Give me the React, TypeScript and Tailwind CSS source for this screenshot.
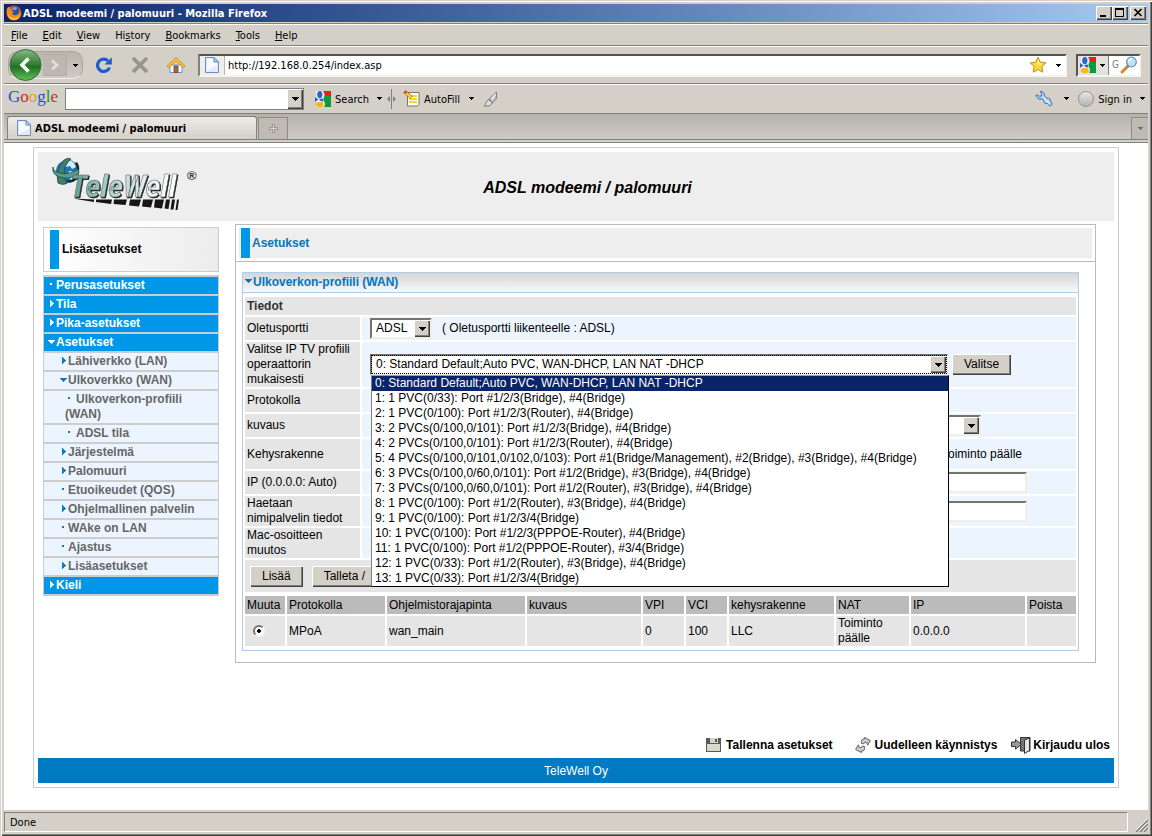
import React from "react";

const raised =
  "bg-[#d4d0c8] shadow-[inset_1px_1px_0_#fff,inset_-1px_-1px_0_#404040,inset_-2px_-2px_0_#808080]";
const sunken =
  "border-t-2 border-l-2 border-b-2 border-r-2 border-t-[#77736a] border-l-[#77736a] border-b-[#f0eee8] border-r-[#f0eee8] bg-white";

function Arrow({ className = "" }: { className?: string }) {
  return (
    <svg className={className} width="7" height="4" viewBox="0 0 7 4" shapeRendering="crispEdges" aria-hidden="true">
      <path d="M0 0h7v1H6v1H5v1H4v1H3V3H2V2H1V1H0z" fill="#000" />
    </svg>
  );
}

function TinyArrow({ fill = "#000" }: { fill?: string }) {
  return (
    <svg width="5" height="3" viewBox="0 0 5 3" shapeRendering="crispEdges" aria-hidden="true">
      <path d="M0 0h5v1H4v1H3v1H2V2H1V1H0z" fill={fill} />
    </svg>
  );
}

function Firefox() {
  return (
    <svg width="16" height="16" viewBox="0 0 16 16" aria-hidden="true">
      <circle cx="8" cy="8" r="7.5" fill="#d9541e" />
      <circle cx="8.5" cy="6.8" r="5.2" fill="#2a50a8" />
      <path d="M6 3q3-2 5 0l-1 2-3 0z" fill="#6fa4e0" />
      <path d="M1 3.5Q2 2 3 1.6L4 3.4 6.6 4 5.6 5.6 8 7 6 8.6q1.6 2.4 4.6 1.4Q13.600 9 13.600 5q3 5-.6 8.400-4.500 3.600-9 .6Q-.5 10.500 1 3.500z" fill="#f08a1d" />
      <path d="M2 6q-.4 5 4 6.600 5 1.200 7.400-2.600-1 5-6 5Q1 14.500 2 6z" fill="#f9c030" />
    </svg>
  );
}

function PageIcon() {
  return (
    <svg width="14" height="16" viewBox="0 0 14 16" aria-hidden="true">
      <path d="M.5.5h8.500l4.500 4.500v10.500H.5z" fill="#dfebfa" stroke="#6b8fc4" />
      <path d="M2 2h6v4h4v3L2 14z" fill="#fff" opacity=".7" />
      <path d="M9 .5V5h4.500z" fill="#b8d2f2" stroke="#6b8fc4" />
    </svg>
  );
}

function GoogleG() {
  return (
    <svg width="16" height="16" viewBox="0 0 16 16" aria-hidden="true">
      <path d="M1 0h15v16H1z" fill="#f2f2ee" />
      <path d="M8 0h8v5H9.500Q10 2 8 0z" fill="#e8201c" />
      <path d="M9.500 5H16v11H9q2-3 0-5.500-1.500-2.500.5-5.500z" fill="#0f9a3c" />
      <path d="M0 6l3.500 2.500L0 11z" fill="#2a63d8" />
      <ellipse cx="4.800" cy="3.600" rx="2.600" ry="3.600" fill="#2a63d8" />
      <path d="M4 8l4-.5v3L5.500 10z" fill="#2a63d8" />
      <ellipse cx="4.800" cy="13.400" rx="4" ry="2.600" fill="#f9b714" />
    </svg>
  );
}

function Reload() {
  return (
    <svg width="18" height="18" viewBox="0 0 18 18" aria-hidden="true">
      <path d="M14.500 11.500A6.200 6.200 0 1 1 13 4.800" fill="none" stroke="#1d5fc8" strokeWidth="3.200" />
      <path d="M16.800 1.200v7.300H9.500z" fill="#1d5fc8" />
    </svg>
  );
}

function Stop() {
  return (
    <svg width="18" height="18" viewBox="0 0 18 18" aria-hidden="true">
      <path d="M2 2l14 14M16 2L2 16" stroke="#97948e" strokeWidth="3.800" />
    </svg>
  );
}

function Home() {
  return (
    <svg width="20" height="18" viewBox="0 0 20 18" aria-hidden="true">
      <path d="M4 9h12v7.500H4z" fill="#f4f8fd" stroke="#6d98cf" />
      <path d="M1 10L10 1.500 19 10l-1.500 1.300L10 5 2.500 11.300z" fill="#ffc935" stroke="#c98a12" strokeWidth=".9" />
      <path d="M8 10h4v6.500H8z" fill="#a4673a" stroke="#7a4620" strokeWidth=".8" />
    </svg>
  );
}

function Star() {
  return (
    <svg width="18" height="18" viewBox="0 0 18 18" aria-hidden="true">
      <path d="M9 1.200l2.400 5 5.400.7-4 3.800 1 5.500L9 13.500l-4.800 2.700 1-5.500-4-3.800 5.400-.7z" fill="#ffd93b" stroke="#c98c12" />
      <path d="M9 3.500l1.600 3.700 3.400.5L9 9z" fill="#fff3a6" />
    </svg>
  );
}

function Magnifier() {
  return (
    <svg width="18" height="18" viewBox="0 0 18 18" aria-hidden="true">
      <path d="M2 16l5.500-5.500" stroke="#e08427" strokeWidth="3" strokeLinecap="round" />
      <path d="M7 11l1.500-1.500" stroke="#7a8794" strokeWidth="2.500" />
      <circle cx="11.500" cy="6" r="4.800" fill="#bfe3fa" stroke="#6e93b8" strokeWidth="1.300" />
      <path d="M8.500 6q.5-3 3.500-3.200" stroke="#fff" strokeWidth="1.400" fill="none" />
    </svg>
  );
}

function Wrench() {
  return (
    <svg width="18" height="18" viewBox="0 0 18 18" aria-hidden="true">
      <path d="M5.500 1.200Q9.500 1.600 9.800 6.400l1.800 1.800q2-.6 3.200.6.900 1 .6 2.400l1.600 2.100q.2 2.500-2.400 2.600l-2.400-2.400q-2.200.2-3-.8-.8-1-.4-2.500L7 8.900Q2.500 10 .9 5.200l1.900-.2L4.600 6.600 6.600 5.600 6.400 3.400z" fill="#a9d0f2" stroke="#3f6fa8" />
      <path d="M8 7l6.500 6.500" stroke="#e8f4fd" strokeWidth="1.200" />
    </svg>
  );
}

function NotePencil() {
  return (
    <svg width="17" height="17" viewBox="0 0 17 17" aria-hidden="true">
      <path d="M4.500 2.500h11.500v12l-1.500 1.500H4.500z" fill="#fffef0" stroke="#77756c" />
      <path d="M7 6h7M6 9h8M6 12h8" stroke="#f0c800" strokeWidth="1.600" />
      <path d="M1.500 1.500l7 6" stroke="#a0781c" strokeWidth="3.400" />
      <path d="M2 2l6 5.200" stroke="#ffd83a" strokeWidth="2" />
      <path d="M.5 2.500l2.200-2 1.600 1.400-2 2.200z" fill="#e0402c" />
    </svg>
  );
}

function Brush() {
  return (
    <svg width="15" height="16" viewBox="0 0 15 16" aria-hidden="true">
      <path d="M13.500 1v6.500L9.500 12 6 8z" fill="#bdbdbd" stroke="#84827e" />
      <path d="M12.500 3L8.500 8.500" stroke="#f0f0f0" strokeWidth="1.500" />
      <path d="M5.500 8.500L9.500 12l-3 3H1q2-1.500 2-3.500z" fill="#dedede" stroke="#77756f" />
    </svg>
  );
}

function TeleWellLogo() {
  return (
    <svg width="150" height="62" viewBox="0 0 150 62" aria-hidden="false">
      <defs>
        <linearGradient id="tw" x1="0" x2="1">
          <stop offset="0" stopColor="#5c9c8c" />
          <stop offset=".35" stopColor="#a9cfc5" />
          <stop offset=".7" stopColor="#e6eeee" />
          <stop offset="1" stopColor="#fff" />
        </linearGradient>
      </defs>
      <circle cx="17.500" cy="15.500" r="11.500" fill="#1878bd" />
      <path d="M15 6q5-3 9 1l2 4-4 2-2-3-4 1zM19 15l6 1 1 4-5 4-3-4z" fill="#d9ecf6" />
      <path d="M27 6q3 4 2 9l-2-1q0-4-2-7zM16 25q6 3 10-1l-2-1q-3 2-7 1z" fill="#1c2a28" />
      <path d="M8 27Q5 14 14 4q4-3 7-1-7 6-7 15 0 5 3 9.500-5 2-9-.5z" fill="#3f7f70" stroke="#1f4b41" strokeWidth=".8" />
      <path d="M3 11q0 5 9 6.500 9 1 16-4.500l1 4q-7 6-15 5Q1 20 3 11z" fill="#5c9a8a" stroke="#1f4b41" strokeWidth=".8" />
      <text
        x="20"
        y="41"
        fontFamily="'Roboto Condensed', 'Open Sans Condensed', 'Liberation Sans', sans-serif"
        fontStyle="italic"
        fontWeight="700"
        fontSize="32"
        fill="url(#tw)"
        stroke="#56605e"
        strokeWidth=".5"
        className="drop-shadow-[1px_1px_0_#1c1c1c]"
      >
        TeleWell
      </text>
      <text x="137" y="24" fontSize="13" fontWeight="700" fill="#333" fontFamily="'Liberation Sans', sans-serif">®</text>
      <path d="M26 42.500l21 1v2.500zM49 43.500h16l-1 4.500-15-2zM67 43.500h13l-1.500 5.500-12-1zM83 43.500h11l-2 7-10-1zM96 43.500h10l-2 8-9-1zM108 43.500h9l-2 9-8-1zM119 43.500h4l-1.500 9.500-4-.5zM125 43.500h3l-1.500 10h-3zM130 43.500h2l-1.500 10.500h-2z" transform="translate(-3 0)" fill="#161616" />
    </svg>
  );
}

function Bullet({ kind, color }: { kind: string; color: string }) {
  if (kind === "down")
    return (
      <svg className="inline-block align-middle" width="7" height="4" viewBox="0 0 7 4" shapeRendering="crispEdges" aria-hidden="true">
        <path d="M0 0h7v1H6v1H5v1H4v1H3V3H2V2H1V1H0z" fill={color} />
      </svg>
    );
  if (kind === "right")
    return (
      <svg className="inline-block align-middle" width="7" height="7" viewBox="0 0 7 7" shapeRendering="crispEdges" aria-hidden="true">
        <path d="M2 0h1v1h1v1h1v1h1v1H5v1H4v1H3v1H2z" fill={color} />
      </svg>
    );
  return (
    <svg className="inline-block align-middle" width="7" height="3" viewBox="0 0 7 3" shapeRendering="crispEdges" aria-hidden="true">
      <path d="M2 0h2v2H2z" fill={color} />
    </svg>
  );
}

const nav = [
  { t: "Perusasetukset", k: "dot", l: 0 },
  { t: "Tila", k: "right", l: 0 },
  { t: "Pika-asetukset", k: "right", l: 0 },
  { t: "Asetukset", k: "down", l: 0 },
  { t: "Lähiverkko (LAN)", k: "right", l: 1 },
  { t: "Ulkoverkko (WAN)", k: "down", l: 1 },
  { t: "Ulkoverkon-profiili (WAN)", k: "dot", l: 2 },
  { t: "ADSL tila", k: "dot", l: 2 },
  { t: "Järjestelmä", k: "right", l: 1 },
  { t: "Palomuuri", k: "right", l: 1 },
  { t: "Etuoikeudet (QOS)", k: "dot", l: 1 },
  { t: "Ohjelmallinen palvelin", k: "right", l: 1 },
  { t: "WAke on LAN", k: "dot", l: 1 },
  { t: "Ajastus", k: "dot", l: 1 },
  { t: "Lisäasetukset", k: "right", l: 1 },
  { t: "Kieli", k: "right", l: 0 },
];

const profiles = [
  "0: Standard Default;Auto PVC, WAN-DHCP, LAN NAT -DHCP",
  "1: 1 PVC(0/33): Port #1/2/3(Bridge), #4(Bridge)",
  "2: 1 PVC(0/100): Port #1/2/3(Router), #4(Bridge)",
  "3: 2 PVCs(0/100,0/101): Port #1/2/3(Bridge), #4(Bridge)",
  "4: 2 PVCs(0/100,0/101): Port #1/2/3(Router), #4(Bridge)",
  "5: 4 PVCs(0/100,0/101,0/102,0/103): Port #1(Bridge/Management), #2(Bridge), #3(Bridge), #4(Bridge)",
  "6: 3 PVCs(0/100,0/60,0/101): Port #1/2(Bridge), #3(Bridge), #4(Bridge)",
  "7: 3 PVCs(0/100,0/60,0/101): Port #1/2(Router), #3(Bridge), #4(Bridge)",
  "8: 1 PVC(0/100): Port #1/2(Router), #3(Bridge), #4(Bridge)",
  "9: 1 PVC(0/100): Port #1/2/3/4(Bridge)",
  "10: 1 PVC(0/100): Port #1/2/3(PPPOE-Router), #4(Bridge)",
  "11: 1 PVC(0/100): Port #1/2(PPPOE-Router), #3/4(Bridge)",
  "12: 1 PVC(0/33): Port #1/2(Router), #3(Bridge), #4(Bridge)",
  "13: 1 PVC(0/33): Port #1/2/3/4(Bridge)",
];

const menus = [
  ["", "F", "ile"],
  ["", "E", "dit"],
  ["", "V", "iew"],
  ["Hi", "s", "tory"],
  ["", "B", "ookmarks"],
  ["", "T", "ools"],
  ["", "H", "elp"],
];

function DropButton() {
  return (
    <span className={`pointer-events-none absolute top-[2px] right-[2px] flex h-[17px] w-4 items-center justify-center ${raised}`}>
      <Arrow />
    </span>
  );
}

function Row({ label, id, height, children }: { label: string; id?: string; height: string; children?: React.ReactNode }) {
  return (
    <div className={`flex gap-[2px] ${height}`}>
      <div className="flex w-[115px] shrink-0 items-center bg-[#e5e5e5] pr-1 pl-[2px]">
        {id ? <label htmlFor={id}>{label}</label> : <span>{label}</span>}
      </div>
      <div className="flex min-w-0 flex-1 items-center bg-[#ecf5ff] pl-2">{children}</div>
    </div>
  );
}

const pageButton = `h-[21px] px-3 whitespace-nowrap ${raised}`;

export default function App() {
  return (
    <div className="flex min-h-screen flex-col bg-[#d4d0c8] p-1 font-['DejaVu_Sans_Condensed','Noto_Sans',sans-serif] text-[11px] leading-[14px] text-black shadow-[inset_1px_1px_0_#d4d0c8,inset_2px_2px_0_#fff,inset_-1px_-1px_0_#404040,inset_-2px_-2px_0_#808080]">
      <header className="flex h-[18px] items-center bg-linear-to-r from-[#0a246a] to-[#a6caf0] pr-[2px] pl-[2px] text-white">
        <Firefox />
        <h1 className="flex-1 pt-px pl-px text-[11px] font-bold">ADSL modeemi / palomuuri - Mozilla Firefox</h1>
        <button aria-label="Minimize" className={`h-[14px] w-4 ${raised}`}>
          <svg width="16" height="14" viewBox="0 0 16 14" shapeRendering="crispEdges"><path d="M4 9h6v2H4z" fill="#000" /></svg>
        </button>
        <button aria-label="Maximize" className={`h-[14px] w-4 ${raised}`}>
          <svg width="16" height="14" viewBox="0 0 16 14" shapeRendering="crispEdges"><path d="M3 2h9v9H3zM4 4v6h7V4z" fill="#000" fillRule="evenodd" /></svg>
        </button>
        <button aria-label="Close" className={`ml-[2px] h-[14px] w-4 ${raised}`}>
          <svg width="16" height="14" viewBox="0 0 16 14"><path d="M4.500 3l7 7M11.500 3l-7 7" stroke="#000" strokeWidth="1.700" /></svg>
        </button>
      </header>

      <nav className="mt-px flex h-[22px] items-center gap-[15px] border-t border-[#808080] pt-[2px] pl-[7px] shadow-[inset_0_1px_0_#fff]">
        {menus.map(([a, k, b]) => (
          <button key={a + k + b}>
            {a}
            <span className="underline">{k}</span>
            {b}
          </button>
        ))}
      </nav>

      <div className="flex h-[38px] items-center border-t border-[#808080] pt-px pr-[7px] pl-1 shadow-[inset_0_1px_0_#fff]">
        <div className="flex h-7 w-[75px] items-center rounded-[10px] border border-[#aaa69e] border-b-[#f0eeea] bg-linear-to-b from-[#b9b5ad] to-[#d0ccc5]">
          <button aria-label="Back" className="shrink-0">
            <svg width="34" height="34" viewBox="0 0 34 34">
              <defs>
                <linearGradient id="bk" x1="0" y1="0" x2="0" y2="1">
                  <stop offset="0" stopColor="#86b886" />
                  <stop offset=".5" stopColor="#2c7d2c" />
                  <stop offset=".55" stopColor="#1e6f1f" />
                  <stop offset="1" stopColor="#5fc15a" />
                </linearGradient>
              </defs>
              <circle cx="16.500" cy="17" r="15.500" fill="url(#bk)" stroke="#3d6b3d" />
              <path d="M19.500 10.500L13 17l6.500 6.500" fill="none" stroke="#fff" strokeWidth="3.600" />
            </svg>
          </button>
          <button aria-label="Forward" className="flex h-[22px] w-6 shrink-0 items-center justify-center border border-l-0 border-[#b1ada5] bg-[#bcb8b0]">
            <svg width="10" height="12" viewBox="0 0 10 12"><path d="M2 1.500L7 6l-5 4.500" fill="none" stroke="#e3e0da" strokeWidth="2.600" /></svg>
          </button>
          <button aria-label="Recent pages" className="flex w-4 shrink-0 justify-center"><TinyArrow /></button>
        </div>
        <button aria-label="Reload" className="ml-3"><Reload /></button>
        <button aria-label="Stop" className="ml-[18px]"><Stop /></button>
        <button aria-label="Home" className="ml-[17px]"><Home /></button>
        <div className="ml-3 flex h-[23px] flex-1 items-stretch border-2 border-t-[#565550] border-r-[#f5f4f0] border-b-[#f5f4f0] border-l-[#808080] bg-white">
          <span className="flex w-[25px] items-center justify-center border-r border-[#bbb8b0] bg-[#f0eeea]"><PageIcon /></span>
          <input aria-label="Address" defaultValue="http://192.168.0.254/index.asp" className="min-w-0 flex-1 pt-px pl-[3px] outline-none" />
          <button aria-label="Bookmark"><Star /></button>
          <button aria-label="History list" className="flex w-[18px] items-center justify-center pl-1"><TinyArrow /></button>
        </div>
        <div className="ml-[9px] flex h-[23px] w-[65px] items-center border-2 border-t-[#565550] border-r-[#f5f4f0] border-b-[#f5f4f0] border-l-[#565550] bg-white">
          <button aria-label="Search engine" className="flex h-full w-[31px] shrink-0 items-center gap-1 border-r border-[#808080] bg-[#e3e1dc] pl-[2px]">
            <GoogleG />
            <TinyArrow />
          </button>
          <input aria-label="Search" placeholder="G" className="w-[11px] pl-[3px] text-[10px] outline-none placeholder:text-[#808080]" />
          <button aria-label="Go"><Magnifier /></button>
        </div>
      </div>

      <div className="flex h-[30px] items-center border-t border-[#808080] pl-1 shadow-[inset_0_1px_0_#fff]">
        <span className="w-[57px] pb-1 font-['Liberation_Serif',serif] text-[17px] leading-5">
          <span className="text-[#1a55c8]">G</span>
          <span className="text-[#d5291f]">o</span>
          <span className="text-[#e0a31a]">o</span>
          <span className="text-[#1a55c8]">g</span>
          <span className="text-[#149a3a]">l</span>
          <span className="text-[#d5291f]">e</span>
        </span>
        <div className="relative h-[22px] w-[239px] border border-[#808080] bg-white">
          <input aria-label="Google search" className="h-full w-[220px] px-1 outline-none" />
          <button aria-label="Search history" className={`absolute top-0 right-0 flex h-5 w-4 items-center justify-center ${raised}`}><Arrow /></button>
        </div>
        <button className="ml-[11px] flex items-center gap-1"><GoogleG /><span className="pt-[2px]">Search</span></button>
        <button aria-label="Search options" className="ml-2"><TinyArrow /></button>
        <svg className="ml-[5px]" width="9" height="20" viewBox="0 0 9 20" aria-hidden="true">
          <path d="M4 0h1v20H4zM0 10l3-3v6zM9 10L6 7v6z" fill="#808080" />
        </svg>
        <button className="ml-[7px] flex items-center gap-1"><NotePencil /><span className="pt-[2px]">AutoFill</span></button>
        <button aria-label="AutoFill options" className="ml-[9px]"><TinyArrow /></button>
        <button aria-label="Highlight" className="ml-[9px]"><Brush /></button>
        <span className="flex-1" />
        <button aria-label="Settings"><Wrench /></button>
        <button aria-label="Settings options" className="ml-[11px]"><TinyArrow /></button>
        <button className="ml-[9px] flex items-center gap-1">
          <span className="h-4 w-4 rounded-full border border-[#98958f] bg-linear-to-b from-[#e6e6e6] to-[#b4b4b4]" />
          <span className="pt-[2px]">Sign in</span>
        </button>
        <button aria-label="Account options" className="mr-[3px] ml-2"><TinyArrow /></button>
      </div>

      <div className="flex h-[27px] items-end border-t border-b border-[#808080] bg-linear-to-b from-[#b4b1a9] to-[#d0ccc5] pl-[3px]">
        <button className="flex h-[23px] w-[250px] items-center gap-1 rounded-t-[3px] border border-b-0 border-[#808080] bg-linear-to-b from-[#edebe8] to-[#d4d0c8] pl-[9px] font-bold">
          <PageIcon />
          <span className="pt-[2px]">ADSL modeemi / palomuuri</span>
        </button>
        <button aria-label="New tab" className="ml-px flex h-[22px] w-[30px] items-center justify-center border border-b-0 border-[#8e8b85] bg-[#bfbbb3]">
          <svg width="9" height="9" viewBox="0 0 9 9" shapeRendering="crispEdges"><path d="M3 0h3v3h3v3H6v3H3V6H0V3h3z" fill="#9c9993" /><path d="M4 1h1v3h3v1H5v3H4V5H1V4h3z" fill="#dad7d1" /></svg>
        </button>
        <span className="flex-1" />
        <button aria-label="List all tabs" className="flex h-[22px] w-[17px] items-center justify-center border border-r-0 border-b-0 border-[#8e8b85] bg-[#bfbbb3]"><TinyArrow fill="#6f6c66" /></button>
      </div>

      <main className="mt-[2px] flex flex-1 flex-col border-t border-[#808080] bg-white px-[29px] pt-1 pb-[22px] font-['Liberation_Sans',sans-serif] text-xs leading-[15px]">
        <div className="flex flex-1 flex-col border border-[#ccc] p-1">
          <div className="grid h-[69px] grid-cols-[160px_1fr_137px] items-center bg-[#eee]">
            <div className="pl-3"><TeleWellLogo /></div>
            <h2 className="pt-[2px] text-center text-base font-bold italic">ADSL modeemi / palomuuri</h2>
          </div>

          <div className="flex flex-1 items-start gap-4 pt-[3px] pr-[18px] pl-[5px]">
            <aside className="mt-[3px] w-[176px] shrink-0">
              <div className="flex h-[45px] items-center gap-[3px] border border-[#ccc] bg-linear-to-r from-white to-[#ececec] pl-[6px] font-bold">
                <span className="h-[39px] w-[9px] bg-[#0097e9]" />
                <h3>Lisäasetukset</h3>
              </div>
              <ul className="mt-[3px] flex flex-col gap-[2px] bg-[#ccc] py-[2px] pr-px pl-px font-bold">
                {nav.map((n) => (
                  <li
                    key={n.t + n.k}
                    className={
                      n.l === 0
                        ? "bg-[#0097e9] py-px pl-1 text-white"
                        : n.l === 1
                          ? "bg-[#ecf5ff] py-px pl-4 text-[#666]"
                          : "bg-[#ecf5ff] py-px pl-[21px] text-[#666]"
                    }
                  >
                    <a href="#" className="flex items-start gap-px">
                      {n.l < 2 ? (
                        <>
                          <span className="flex h-[13px] w-[7px] items-center"><Bullet kind={n.k} color={n.l ? "#0a7cc4" : "#fff"} /></span>
                          <span>{n.t}</span>
                        </>
                      ) : (
                        <span className="w-32 pr-[2px]">
                          <span className="mr-[3px] inline-flex h-[13px] items-center pl-px align-top"><Bullet kind={n.k} color="#0a7cc4" /></span>
                          {n.t}
                        </span>
                      )}
                    </a>
                  </li>
                ))}
              </ul>
            </aside>

            <section className="min-w-0 flex-1 border border-[#bbb] pb-[11px]">
              <div className="border-b border-[#bbb] px-[3px] py-[3px]">
                <div className="flex h-[30px] items-center gap-[2px] bg-[#eee] pl-[2px]">
                  <span className="h-full w-[9px] bg-[#0097e9]" />
                  <h3 className="font-bold text-[#0077c0]">Asetukset</h3>
                </div>
              </div>
              <div className="mt-[10px] mr-4 ml-[6px] border border-[#b3cde8]">
                <h4 className="flex h-5 items-center gap-px border-b border-[#b3cde8] bg-linear-to-b from-[#d6d6d6] to-[#f8f8f8] pl-[2px] font-bold text-[#0077c0]">
                  <span className="flex h-2 items-start"><Bullet kind="down" color="#0077c0" /></span>
                  Ulkoverkon-profiili (WAN)
                </h4>
                <div className="flex flex-col gap-[2px] px-[2px] pt-1 pb-1">
                  <div className="flex h-[18px] items-center bg-[#e5e5e5] pl-[2px] font-bold text-[#333]">Tiedot</div>
                  <Row label="Oletusportti" id="port" height="h-[23px]">
                    <div className="relative mr-[10px] h-[21px] w-[62px]">
                      <select id="port" className={`h-full w-full appearance-none pl-1 outline-none ${sunken}`}>
                        <option>ADSL</option>
                      </select>
                      <DropButton />
                    </div>
                    <span>( Oletusportti liikenteelle : ADSL)</span>
                  </Row>
                  <Row label="Valitse IP TV profiili operaattorin mukaisesti" id="profile" height="h-[45px]">
                    <div className="relative h-[21px] w-[578px] shrink-0">
                      <select id="profile" className={`h-full w-full appearance-none pl-1 outline-1 -outline-offset-2 outline-dotted outline-black ${sunken}`}>
                        {profiles.map((p) => (
                          <option key={p}>{p}</option>
                        ))}
                      </select>
                      <DropButton />
                      <ul role="listbox" aria-label="Profiilit" className="absolute top-full right-[-1px] left-px z-10 border border-t-[#a0a0a0] border-r-black border-b-black border-l-[#808080] bg-white">
                        {profiles.map((p, i) => (
                          <li
                            key={p}
                            role="option"
                            aria-selected={i === 0}
                            className={i === 0 ? "bg-[#0a246a] pl-[3px] whitespace-nowrap text-white" : "pl-[3px] whitespace-nowrap"}
                          >
                            {p}
                          </li>
                        ))}
                      </ul>
                    </div>
                    <button className={`ml-1 ${pageButton}`}>Valitse</button>
                  </Row>
                  <Row label="Protokolla" height="h-[23px]" />
                  <Row label="kuvaus" id="desc" height="h-[23px]">
                    <div className="relative ml-[300px] h-[21px] w-[311px]">
                      <select id="desc" className={`h-full w-full appearance-none outline-none ${sunken}`} />
                      <DropButton />
                    </div>
                  </Row>
                  <Row label="Kehysrakenne" height="h-[30px]">
                    <span className="pl-[572px] whitespace-nowrap">Toiminto päälle</span>
                  </Row>
                  <Row label="IP (0.0.0.0: Auto)" id="ip" height="h-[23px]">
                    <input id="ip" className={`ml-[400px] h-[21px] w-[257px] ${sunken}`} />
                  </Row>
                  <Row label="Haetaan nimipalvelin tiedot" id="dns" height="h-[30px]">
                    <input id="dns" className={`ml-[400px] h-[21px] w-[257px] ${sunken}`} />
                  </Row>
                  <Row label="Mac-osoitteen muutos" height="h-[30px]" />
                  <div className="flex h-8 items-center gap-[9px] bg-[#e5e5e5] pl-[5px]">
                    <button className={pageButton}>Lisää</button>
                    <button className={pageButton}>Talleta /</button>
                  </div>
                  <table className="mt-[2px] w-full table-fixed border-separate border-spacing-0 text-left">
                    <colgroup>
                      <col className="w-[42px]" />
                      <col className="w-[100px]" />
                      <col className="w-[140px]" />
                      <col />
                      <col className="w-[43px]" />
                      <col className="w-[43px]" />
                      <col className="w-[107px]" />
                      <col className="w-[75px]" />
                      <col className="w-[116px]" />
                      <col className="w-[49px]" />
                    </colgroup>
                    <thead>
                      <tr className="h-5">
                        {["Muuta", "Protokolla", "Ohjelmistorajapinta", "kuvaus", "VPI", "VCI", "kehysrakenne", "NAT", "IP", "Poista"].map((h) => (
                          <th key={h} className="border-r-2 border-b-2 border-white bg-[#bbb] pr-0 pl-[2px] font-normal last:border-r-0">{h}</th>
                        ))}
                      </tr>
                    </thead>
                    <tbody>
                      <tr className="h-[30px]">
                        <td className="border-r-2 border-white bg-[#e5e5e5] pl-2">
                          <input
                            type="radio"
                            name="entry"
                            aria-label="Muuta wan_main"
                            defaultChecked
                            className="block h-3 w-3 appearance-none rounded-full border-2 border-t-[#77736a] border-r-[#f4f4f0] border-b-[#f4f4f0] border-l-[#77736a] bg-white bg-radial from-black from-30% to-white to-35%"
                          />
                        </td>
                        {["MPoA", "wan_main", "", "0", "100", "LLC", "Toiminto päälle", "0.0.0.0", ""].map((c, i) => (
                          <td key={i} className="border-r-2 border-white bg-[#e5e5e5] pl-[2px] last:border-r-0">{c}</td>
                        ))}
                      </tr>
                    </tbody>
                  </table>
                </div>
              </div>
            </section>
          </div>

          <div className="flex h-7 items-center justify-end pt-[2px] pr-1 font-bold">
            <a href="#" className="mr-[22px] flex items-center gap-1">
              <svg width="16" height="15" viewBox="0 0 16 15" aria-hidden="true">
                <path d="M0 0h15v14H0z" fill="#5a5a5a" />
                <path d="M4 0h8v5H4z" fill="#d5d5d5" />
                <path d="M9 1h2v3H9z" fill="#5a5a5a" />
                <path d="M1 6h13v7H1z" fill="#d5dcc8" />
              </svg>
              Tallenna asetukset
            </a>
            <a href="#" className="mr-[14px] flex items-center gap-1">
              <svg width="16" height="16" viewBox="0 0 16 16" aria-hidden="true">
                <g fill="#ccc" stroke="#555" strokeWidth=".9" strokeLinejoin="round">
                  <path d="M6.500 6.500Q5.500 1.800 10 1.600L9.600.4 15.400 3.600 12.600 8.200 11.800 5.500Q9.500 4.200 9 6.800z" />
                  <path d="M9.500 9.500Q10.500 14.200 6 14.400L6.400 15.600.6 12.400 3.400 7.800 4.200 10.500Q6.500 11.800 7 9.200z" />
                </g>
              </svg>
              Uudelleen käynnistys
            </a>
            <a href="#" className="flex items-center gap-[2px]">
              <svg width="20" height="17" viewBox="0 0 20 17" aria-hidden="true">
                <path d="M9.500.5h9.500v13.500h-9.500z" fill="#777" stroke="#333" />
                <path d="M18.500 1v12.500l-5 3V3z" fill="#e4e4e4" stroke="#333" />
                <path d="M.5 5h4V2.500l6 4.800-6 4.800V9.500h-4z" fill="#9a9a9a" stroke="#333" />
              </svg>
              Kirjaudu ulos
            </a>
          </div>
          <footer className="flex h-[25px] items-center justify-center bg-[#007bc3] pt-[2px] text-white">TeleWell Oy</footer>
        </div>
      </main>

      <div className="flex h-[22px] items-end pt-[2px]">
        <div className="flex h-5 flex-1 items-center border border-t-[#808080] border-r-white border-b-white border-l-[#808080] pt-[2px] pl-[5px]">Done</div>
        <svg className="ml-[7px]" width="13" height="13" viewBox="0 0 13 13" aria-hidden="true">
          <path d="M1 13L13 1M5 13l8-8M9 13l4-4" stroke="#808080" strokeWidth="1.500" />
          <path d="M0 12L12 0M4 12l8-8M8 12l4-4" stroke="#fff" strokeWidth=".8" />
        </svg>
      </div>
    </div>
  );
}
